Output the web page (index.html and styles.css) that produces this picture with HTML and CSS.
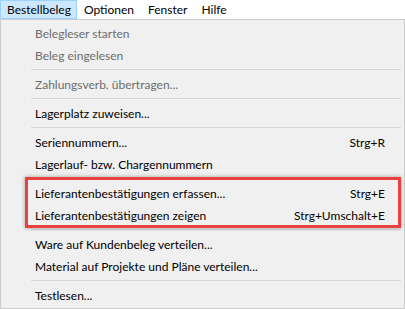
FILE: index.html
```html
<!DOCTYPE html>
<html lang="de">
<head>
  <meta charset="UTF-8" />
  <title>Bestellbeleg</title>
  <link rel="stylesheet" href="styles.css">
</head>
<body>

  <div class="menubar">
    <div class="top active">Bestellbeleg</div>
    <div class="top">Optionen</div>
    <div class="top">Fenster</div>
    <div class="top">Hilfe</div>
  </div>

  <div class="dropdown">
    <div class="item disabled"><span>Belegleser starten</span></div>
    <div class="item disabled"><span>Beleg eingelesen</span></div>
    <div class="sep"></div>
    <div class="item disabled"><span>Zahlungsverb. übertragen...</span></div>
    <div class="sep"></div>
    <div class="item"><span>Lagerplatz zuweisen...</span></div>
    <div class="sep"></div>
    <div class="item"><span>Seriennummern...</span><span class="key">Strg+R</span></div>
    <div class="item"><span>Lagerlauf- bzw. Chargennummern</span></div>
    <div class="sep"></div>
    <div class="item"><span>Lieferantenbestätigungen erfassen...</span><span class="key">Strg+E</span></div>
    <div class="item"><span>Lieferantenbestätigungen zeigen</span><span class="key">Strg+Umschalt+E</span></div>
    <div class="sep"></div>
    <div class="item"><span>Ware auf Kundenbeleg verteilen...</span></div>
    <div class="item"><span>Material auf Projekte und Pläne verteilen...</span></div>
    <div class="sep"></div>
    <div class="item"><span>Testlesen...</span></div>
  </div>

  <!-- Markierung -->
  <div class="mark"></div>

</body>
</html>
```

FILE: styles.css
```css
body {
  margin: 0;
  font-family: Lato, "Noto Sans", sans-serif;
  font-size: 12px;
  color: #000;
  background: #fff;
  position: relative;
  width: 405px;
  height: 309px;
  overflow: hidden;
}
.menubar {
  display: flex;
  height: 19px;
  background: #fff;
}
.top {
  padding: 0 6px 0 6px;
  height: 17px;
  line-height: 18px;
  border: 1px solid transparent;
}
.top.active {
  padding-right: 5px;
  background: #cce8ff;
  border-color: #99d1ff;
}
.dropdown {
  width: 405px;
  box-sizing: border-box;
  background: #f0f0f0;
  border: 1px solid #cccccc;
  padding: 2px;
}
.item {
  display: flex;
  justify-content: space-between;
  align-items: center;
  height: 22px;
  padding: 0 17px 0 32px;
}
.item.disabled {
  color: #6d6d6d;
}
.sep {
  height: 1px;
  background: #d7d7d7;
  margin: 3px 1px 3px 28px;
}
.mark {
  position: absolute;
  left: 25px;
  top: 177px;
  width: 376px;
  height: 51px;
  box-sizing: border-box;
  border: 3px solid #e8413f;
  box-shadow: 0 0 4px rgba(0, 0, 0, 0.35);
}
```
